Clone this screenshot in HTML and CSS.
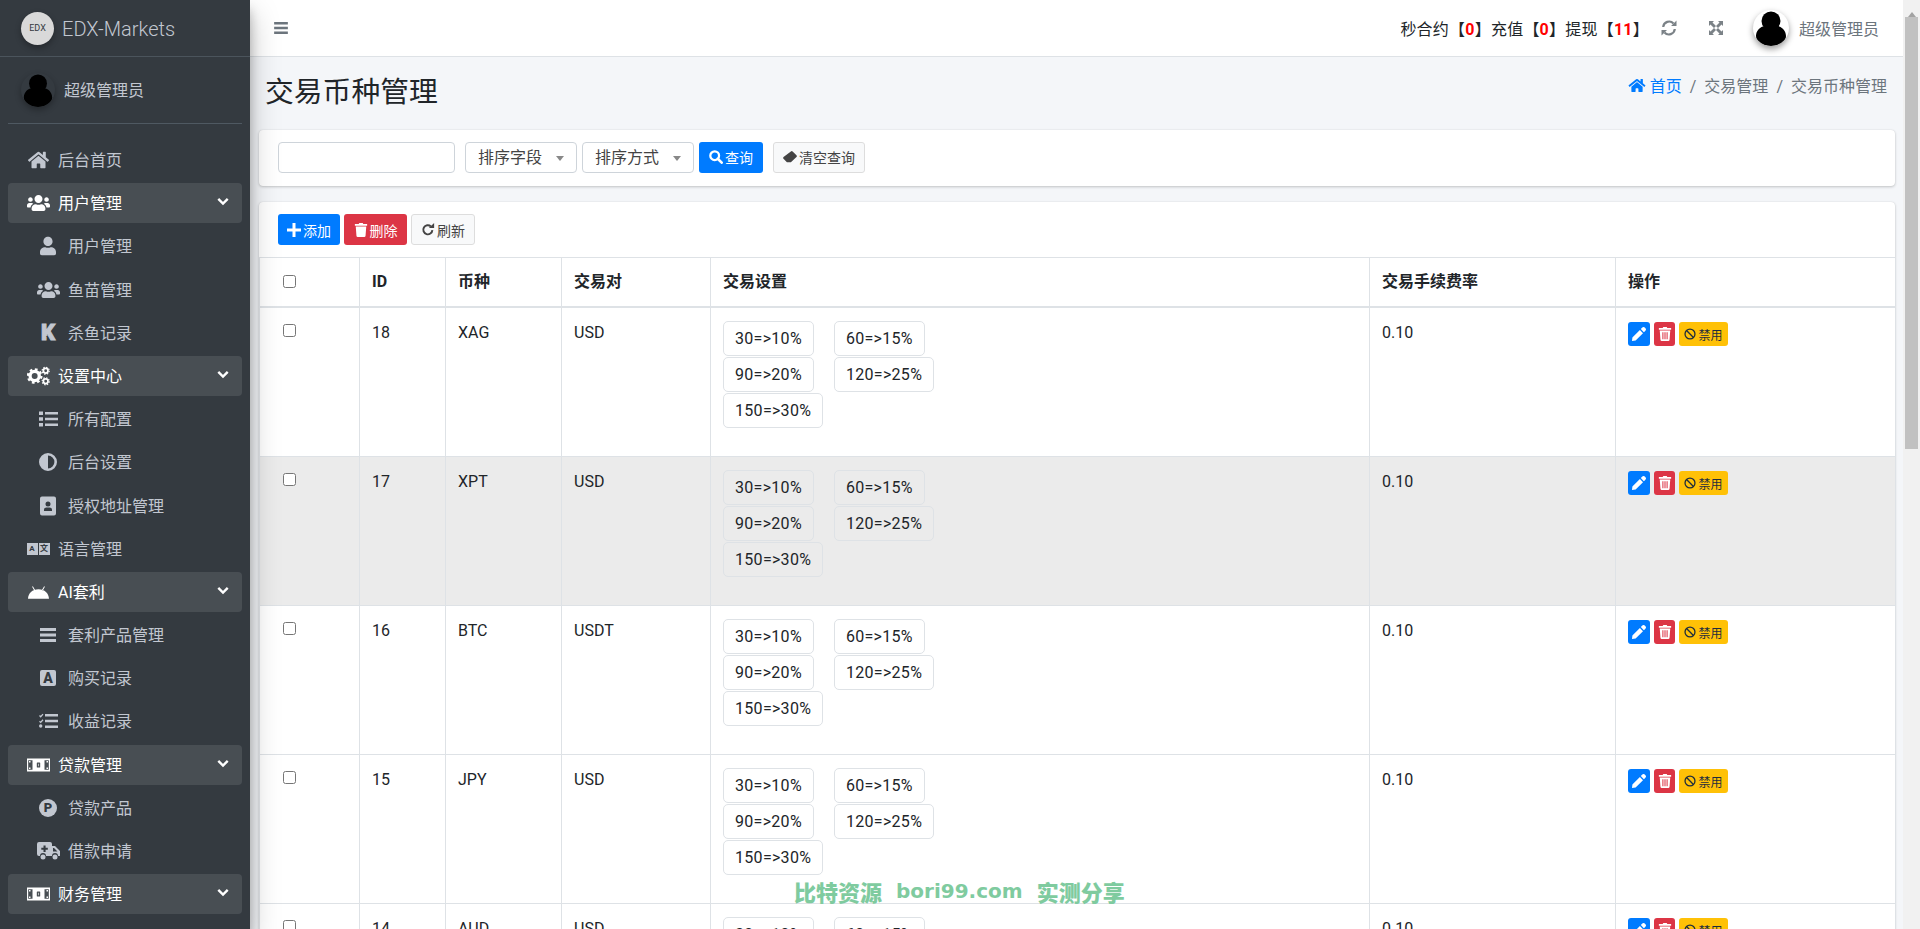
FILE: index.html
```html
<!DOCTYPE html>
<html lang="zh-CN">
<head>
    <meta charset="UTF-8">
    <meta name="viewport" content="width=device-width, initial-scale=1.0">
    <title>交易币种管理</title>
    <link rel="stylesheet" href="styles.css">
</head>
<body>

<svg class="icon-defs" aria-hidden="true">
    <symbol id="i-home" viewBox="0 0 576 512"><path d="M280.37 148.26L96 300.11V464a16 16 0 0 0 16 16l112.06-.29a16 16 0 0 0 15.92-16V368a16 16 0 0 1 16-16h64a16 16 0 0 1 16 16v95.64a16 16 0 0 0 16 16.05L464 480a16 16 0 0 0 16-16V300L295.67 148.26a12.19 12.19 0 0 0-15.3 0zM571.6 251.47L488 182.56V44.05a12 12 0 0 0-12-12h-56a12 12 0 0 0-12 12v72.61L318.47 43a48 48 0 0 0-61 0L4.34 251.47a12 12 0 0 0-1.6 16.9l25.5 31A12 12 0 0 0 45.15 301l235.22-193.74a12.19 12.19 0 0 1 15.3 0L530.9 301a12 12 0 0 0 16.9-1.6l25.5-31a12 12 0 0 0-1.7-16.93z"/></symbol>
    <symbol id="i-users" viewBox="0 0 640 512"><path d="M96 224c35.3 0 64-28.7 64-64s-28.7-64-64-64-64 28.7-64 64 28.7 64 64 64zm448 0c35.3 0 64-28.7 64-64s-28.7-64-64-64-64 28.7-64 64 28.7 64 64 64zm32 32h-64c-17.6 0-33.5 7.1-45.1 18.6 40.3 22.1 68.9 62 75.1 109.4h66c17.7 0 32-14.3 32-32v-32c0-35.3-28.7-64-64-64zm-256 0c61.9 0 112-50.1 112-112S381.9 32 320 32 208 82.1 208 144s50.1 112 112 112zm76.8 32h-8.3c-20.8 10-43.9 16-68.5 16s-47.6-6-68.5-16h-8.3C179.6 288 128 339.6 128 403.2V432c0 26.5 21.5 48 48 48h288c26.5 0 48-21.5 48-48v-28.8c0-63.6-51.6-115.2-115.2-115.2zm-223.7-13.4C161.5 263.1 145.6 256 128 256H64c-35.3 0-64 28.7-64 64v32c0 17.7 14.3 32 32 32h65.9c6.3-47.4 34.9-87.3 75.2-109.4z"/></symbol>
    <symbol id="i-user" viewBox="0 0 448 512"><path d="M224 256c70.7 0 128-57.3 128-128S294.7 0 224 0 96 57.3 96 128s57.3 128 128 128zm89.6 32h-16.7c-22.2 10.2-46.9 16-72.9 16s-50.6-5.8-72.9-16h-16.7C60.2 288 0 348.2 0 422.4V464c0 26.5 21.5 48 48 48h352c26.5 0 48-21.5 48-48v-41.6c0-74.2-60.2-134.4-134.4-134.4z"/></symbol>
    <symbol id="i-chevron" viewBox="0 0 14 10"><path d="M1.5 2.5L7 8l5.500-5.500" fill="none" stroke="currentColor" stroke-width="2.800"/></symbol>
    <symbol id="i-cogs" viewBox="0 0 24 20">
        <circle cx="8" cy="10" r="4.800" fill="none" stroke="currentColor" stroke-width="3.400"/>
        <circle cx="8" cy="10" r="7" fill="none" stroke="currentColor" stroke-width="2.400" stroke-dasharray="2.800 2.700"/>
        <circle cx="19.500" cy="4.500" r="2.400" fill="none" stroke="currentColor" stroke-width="1.800"/>
        <circle cx="19.500" cy="4.500" r="3.700" fill="none" stroke="currentColor" stroke-width="1.200" stroke-dasharray="1.500 1.400"/>
        <circle cx="19.500" cy="15.500" r="2.400" fill="none" stroke="currentColor" stroke-width="1.800"/>
        <circle cx="19.500" cy="15.500" r="3.700" fill="none" stroke="currentColor" stroke-width="1.200" stroke-dasharray="1.500 1.400"/>
    </symbol>
    <symbol id="i-list" viewBox="0 0 19 15"><path d="M0 0h4v3.600H0zM0 5.700h4v3.600H0zM0 11.400h4V15H0zM6 .6h13v2.400H6zM6 6.300h13v2.400H6zM6 12h13v2.400H6z"/></symbol>
    <symbol id="i-adjust" viewBox="0 0 18 18"><path fill-rule="evenodd" d="M9 0a9 9 0 1 1 0 18A9 9 0 0 1 9 0zm0 2.600v12.800a6.400 6.400 0 0 0 0-12.800z"/></symbol>
    <symbol id="i-contact" viewBox="0 0 16 19"><path fill-rule="evenodd" d="M2 0h12a2 2 0 0 1 2 2v15a2 2 0 0 1-2 2H2a2 2 0 0 1-2-2V2a2 2 0 0 1 2-2zm6 5a2.500 2.500 0 1 0 0 5 2.500 2.500 0 0 0 0-5zm-4 9.500h8v-1.300c0-1.300-1.200-2.200-2.400-2.200H6.400C5.200 11 4 11.900 4 13.200z"/></symbol>
    <symbol id="i-android" viewBox="0 0 22 14"><path d="M0 14C.3 8.500 4.500 4.200 11 4.200S21.700 8.500 22 14zM6.500 5.500L4.300 1.500l.8-.5 2.300 4zM15.500 5.500l2.200-4-.8-.5-2.300 4z"/></symbol>
    <symbol id="i-bars" viewBox="0 0 16 14"><path d="M0 0h16v3H0zM0 5.500h16v3H0zM0 11h16v3H0z"/></symbol>
    <symbol id="i-tasks" viewBox="0 0 19 15"><path d="M6 .6h13v2.400H6zM6 6.300h13v2.400H6zM6 12h13v2.400H6zM0 12.500a1.700 1.700 0 1 1 3.400 0 1.700 1.700 0 0 1-3.400 0z"/><path d="M.5 2l1.200 1.200L4 .6M.5 7.700l1.200 1.200L4 6.300" fill="none" stroke="currentColor" stroke-width="1.300"/></symbol>
    <symbol id="i-money" viewBox="0 0 23 13"><path fill-rule="evenodd" d="M0 0h23v13H0zM1.200 1.800v9.400h4.300V1.800zM17.500 1.800v9.400h4.300V1.800zM2 2.600h1.500v1.500H2zM2 8.900h1.500v1.500H2zM19.500 2.600H21v1.500h-1.500zM19.500 8.900H21v1.500h-1.500zM10.400 4h2.200a.6.6 0 0 1 .6.6v3.800a.6.6 0 0 1-.6.600h-2.200a.6.6 0 0 1-.6-.6V4.600a.6.6 0 0 1 .6-.6zm.8 1.200v2.600h.6V5.200z"/></symbol>
    <symbol id="i-ambulance" viewBox="0 0 23 18"><path fill-rule="evenodd" d="M2 0h11a2 2 0 0 1 2 2v2h3l5 5v5h-2a3 3 0 0 0-6 0H9a3 3 0 0 0-6 0H2a2 2 0 0 1-2-2V2a2 2 0 0 1 2-2zm4.500 3.500v2.200H4.300v2.100h2.200V10h2.100V7.800h2.200V5.700H8.600V3.500zM16 6v3.500h4.500L17 6z"/><circle cx="6" cy="15" r="2.500"/><circle cx="18" cy="15" r="2.500"/></symbol>
    <symbol id="i-search" viewBox="0 0 16 16"><circle cx="6.500" cy="6.500" r="5" fill="none" stroke="currentColor" stroke-width="2.600"/><path d="M10 10l4.500 4.500" stroke="currentColor" stroke-width="3" stroke-linecap="round"/></symbol>
    <symbol id="i-eraser" viewBox="0 0 16 14"><path d="M9 .6a1.500 1.500 0 0 1 2 0l4.400 4.400a1.500 1.500 0 0 1 0 2L9 13H4.500L.6 9.100a1.500 1.500 0 0 1 0-2z"/></symbol>
    <symbol id="i-plus" viewBox="0 0 14 14"><path d="M5.500 0h3v5.500H14v3H8.500V14h-3V8.500H0v-3h5.500z"/></symbol>
    <symbol id="i-trash" viewBox="0 0 14 16"><path d="M5 0h4l.6 1H14v2H0V1h4.400zM1 4h12l-.8 10.600A1.500 1.500 0 0 1 10.700 16H3.300a1.500 1.500 0 0 1-1.500-1.400z"/></symbol>
    <symbol id="i-trash-o" viewBox="0 0 14 16"><path fill-rule="evenodd" d="M5 0h4l.6 1H14v2H0V1h4.400zM1 4h12l-.8 10.600A1.500 1.500 0 0 1 10.700 16H3.300a1.500 1.500 0 0 1-1.500-1.400zm3 2v8h1.200V6zm2.400 0v8h1.200V6zm2.400 0v8H10V6z"/></symbol>
    <symbol id="i-redo" viewBox="0 0 16 16"><path d="M13 8.200a5.200 5.200 0 1 1-1.700-4.300" fill="none" stroke="currentColor" stroke-width="2.200"/><path d="M9 5.800h6V0z"/></symbol>
    <symbol id="i-pencil" viewBox="0 0 14 14"><path d="M10.300.6a1.800 1.800 0 0 1 2.500 0l.6.6a1.800 1.800 0 0 1 0 2.500l-1.500 1.500-3.100-3.100zM7.900 3.100L11 6.200 3.600 13.600 0 14l.4-3.500z"/></symbol>
    <symbol id="i-ban" viewBox="0 0 14 14"><circle cx="7" cy="7" r="5.800" fill="none" stroke="currentColor" stroke-width="1.500"/><path d="M3 3l8 8" stroke="currentColor" stroke-width="1.500"/></symbol>
    <symbol id="i-sync" viewBox="0 0 16 16"><path d="M2.200 7A6 6 0 0 1 12.500 3.400M13.800 9A6 6 0 0 1 3.500 12.600" fill="none" stroke="currentColor" stroke-width="2.200"/><path d="M15.500 .6v5.500H10zM.5 15.400V9.900H6z"/></symbol>
    <symbol id="i-expand" viewBox="0 0 14 14"><path d="M0 0h5L3.500 1.500 7 5 5 7 1.500 3.500 0 5zM14 0v5l-1.500-1.500L9 7 7 5l3.500-3.500L9 0zM14 14H9l1.500-1.500L7 9l2-2 3.500 3.500L14 9zM0 14V9l1.500 1.500L5 7l2 2-3.500 3.500L5 14z"/></symbol>
    <symbol id="i-avatar" viewBox="0 0 36 36"><circle cx="18" cy="11" r="9.500"/><path d="M3 26c0-6 5-9.500 8-9.800 2 1.800 4.500 2.500 7 2.500s5-.7 7-2.500c3 .3 8 3.800 8 9.800 0 6-7 10-15 10S3 32 3 26z"/></symbol>
</svg>

<div class="app">
    <aside class="sidebar">
        <div class="brand">
            <span class="brand-logo">EDX</span>
            <span class="brand-text">EDX-Markets</span>
        </div>
        <div class="user-panel">
            <svg class="avatar"><use href="#i-avatar"/></svg>
            <span>超级管理员</span>
        </div>
        <nav class="nav">
            <a class="nav-link"><span class="nav-icon"><svg class="w20"><use href="#i-home"/></svg></span>后台首页</a>
            <a class="nav-link open"><span class="nav-icon"><svg class="w23"><use href="#i-users"/></svg></span>用户管理<svg class="chevron"><use href="#i-chevron"/></svg></a>
            <a class="nav-link sub"><span class="nav-icon"><svg class="w16"><use href="#i-user"/></svg></span>用户管理</a>
            <a class="nav-link sub"><span class="nav-icon"><svg class="w23"><use href="#i-users"/></svg></span>鱼苗管理</a>
            <a class="nav-link sub"><span class="nav-icon"><span class="k-icon">K</span></span>杀鱼记录</a>
            <a class="nav-link open"><span class="nav-icon"><svg class="w23"><use href="#i-cogs"/></svg></span>设置中心<svg class="chevron"><use href="#i-chevron"/></svg></a>
            <a class="nav-link sub"><span class="nav-icon"><svg class="w19"><use href="#i-list"/></svg></span>所有配置</a>
            <a class="nav-link sub"><span class="nav-icon"><svg class="w18"><use href="#i-adjust"/></svg></span>后台设置</a>
            <a class="nav-link sub"><span class="nav-icon"><svg class="w16"><use href="#i-contact"/></svg></span>授权地址管理</a>
            <a class="nav-link"><span class="nav-icon"><span class="lang-icon"><b>A</b><b>文</b></span></span>语言管理</a>
            <a class="nav-link open"><span class="nav-icon"><svg class="w21"><use href="#i-android"/></svg></span>AI套利<svg class="chevron"><use href="#i-chevron"/></svg></a>
            <a class="nav-link sub"><span class="nav-icon"><svg class="w16"><use href="#i-bars"/></svg></span>套利产品管理</a>
            <a class="nav-link sub"><span class="nav-icon"><span class="box-icon">A</span></span>购买记录</a>
            <a class="nav-link sub"><span class="nav-icon"><svg class="w19"><use href="#i-tasks"/></svg></span>收益记录</a>
            <a class="nav-link open"><span class="nav-icon"><svg class="w23"><use href="#i-money"/></svg></span>贷款管理<svg class="chevron"><use href="#i-chevron"/></svg></a>
            <a class="nav-link sub"><span class="nav-icon"><span class="circle-icon">P</span></span>贷款产品</a>
            <a class="nav-link sub"><span class="nav-icon"><svg class="w23"><use href="#i-ambulance"/></svg></span>借款申请</a>
            <a class="nav-link open"><span class="nav-icon"><svg class="w23"><use href="#i-money"/></svg></span>财务管理<svg class="chevron"><use href="#i-chevron"/></svg></a>
        </nav>
    </aside>

    <div class="main">
        <header class="topbar">
            <svg class="menu-toggle"><use href="#i-bars"/></svg>
            <div class="topbar-right">
                <div class="counters">秒合约<span class="br">【</span><b>0</b><span class="br">】</span>充值<span class="br">【</span><b>0</b><span class="br">】</span>提现<span class="br">【</span><b>11</b><span class="br">】</span></div>
                <svg class="top-icon sync"><use href="#i-sync"/></svg>
                <svg class="top-icon expand"><use href="#i-expand"/></svg>
                <svg class="avatar top-avatar"><use href="#i-avatar"/></svg>
                <span class="top-name">超级管理员</span>
            </div>
        </header>

        <div class="content-header">
            <h1>交易币种管理</h1>
            <div class="breadcrumb">
                <a><svg class="crumb-home"><use href="#i-home"/></svg> 首页</a>
                <span class="sep">/</span>
                <span>交易管理</span>
                <span class="sep">/</span>
                <span>交易币种管理</span>
            </div>
        </div>

        <div class="card search-card">
            <input type="text" class="search-input">
            <button class="select-btn">排序字段<i class="caret"></i></button>
            <button class="select-btn">排序方式<i class="caret"></i></button>
            <button class="btn btn-primary search-btn"><svg class="btn-icon"><use href="#i-search"/></svg>查询</button>
            <button class="btn btn-light clear-btn"><svg class="btn-icon"><use href="#i-eraser"/></svg>清空查询</button>
        </div>

        <div class="card table-card">
            <div class="toolbar">
                <button class="btn btn-primary"><svg class="btn-icon"><use href="#i-plus"/></svg>添加</button>
                <button class="btn btn-danger"><svg class="btn-icon"><use href="#i-trash"/></svg>删除</button>
                <button class="btn btn-light"><svg class="btn-icon"><use href="#i-redo"/></svg>刷新</button>
            </div>
            <table>
                <colgroup>
                    <col class="col-check"><col class="col-id"><col class="col-coin"><col class="col-pair">
                    <col class="col-set"><col class="col-fee"><col class="col-op">
                </colgroup>
                <thead>
                    <tr>
                        <th class="check"><input type="checkbox"></th>
                        <th>ID</th><th>币种</th><th>交易对</th><th>交易设置</th><th>交易手续费率</th><th>操作</th>
                    </tr>
                </thead>
                <tbody>
                    <tr>
                        <td class="check"><input type="checkbox"></td>
                        <td>18</td><td>XAG</td><td>USD</td>
                        <td><div class="tags"><span class="tag">30=&gt;10%</span><span class="tag">60=&gt;15%</span><span class="tag">90=&gt;20%</span><span class="tag">120=&gt;25%</span><span class="tag">150=&gt;30%</span></div></td>
                        <td>0.10</td>
                        <td><div class="ops"><button class="op op-edit"><svg><use href="#i-pencil"/></svg></button><button class="op op-del"><svg><use href="#i-trash-o"/></svg></button><button class="op op-ban"><svg><use href="#i-ban"/></svg>禁用</button></div></td>
                    </tr>
                    <tr class="hover">
                        <td class="check"><input type="checkbox"></td>
                        <td>17</td><td>XPT</td><td>USD</td>
                        <td><div class="tags"><span class="tag">30=&gt;10%</span><span class="tag">60=&gt;15%</span><span class="tag">90=&gt;20%</span><span class="tag">120=&gt;25%</span><span class="tag">150=&gt;30%</span></div></td>
                        <td>0.10</td>
                        <td><div class="ops"><button class="op op-edit"><svg><use href="#i-pencil"/></svg></button><button class="op op-del"><svg><use href="#i-trash-o"/></svg></button><button class="op op-ban"><svg><use href="#i-ban"/></svg>禁用</button></div></td>
                    </tr>
                    <tr>
                        <td class="check"><input type="checkbox"></td>
                        <td>16</td><td>BTC</td><td>USDT</td>
                        <td><div class="tags"><span class="tag">30=&gt;10%</span><span class="tag">60=&gt;15%</span><span class="tag">90=&gt;20%</span><span class="tag">120=&gt;25%</span><span class="tag">150=&gt;30%</span></div></td>
                        <td>0.10</td>
                        <td><div class="ops"><button class="op op-edit"><svg><use href="#i-pencil"/></svg></button><button class="op op-del"><svg><use href="#i-trash-o"/></svg></button><button class="op op-ban"><svg><use href="#i-ban"/></svg>禁用</button></div></td>
                    </tr>
                    <tr>
                        <td class="check"><input type="checkbox"></td>
                        <td>15</td><td>JPY</td><td>USD</td>
                        <td><div class="tags"><span class="tag">30=&gt;10%</span><span class="tag">60=&gt;15%</span><span class="tag">90=&gt;20%</span><span class="tag">120=&gt;25%</span><span class="tag">150=&gt;30%</span></div></td>
                        <td>0.10</td>
                        <td><div class="ops"><button class="op op-edit"><svg><use href="#i-pencil"/></svg></button><button class="op op-del"><svg><use href="#i-trash-o"/></svg></button><button class="op op-ban"><svg><use href="#i-ban"/></svg>禁用</button></div></td>
                    </tr>
                    <tr>
                        <td class="check"><input type="checkbox"></td>
                        <td>14</td><td>AUD</td><td>USD</td>
                        <td><div class="tags"><span class="tag">30=&gt;10%</span><span class="tag">60=&gt;15%</span><span class="tag">90=&gt;20%</span><span class="tag">120=&gt;25%</span><span class="tag">150=&gt;30%</span></div></td>
                        <td>0.10</td>
                        <td><div class="ops"><button class="op op-edit"><svg><use href="#i-pencil"/></svg></button><button class="op op-del"><svg><use href="#i-trash-o"/></svg></button><button class="op op-ban"><svg><use href="#i-ban"/></svg>禁用</button></div></td>
                    </tr>
                </tbody>
            </table>
        </div>
    </div>

    <div class="scrollbar" aria-hidden="true">
        <div class="scroll-up"></div>
        <div class="scroll-thumb"></div>
    </div>
</div>

<div class="watermark"><span>比特资源</span><span>bori99.com</span><span>实测分享</span></div>

</body>
</html>
```

FILE: styles.css
```css
* {
    box-sizing: border-box;
}
html, body {
    margin: 0;
    height: 100%;
    overflow: hidden;
}
body {
    font-family: Roboto, "Noto Sans CJK SC", sans-serif;
    font-size: 16px;
    line-height: 24px;
    color: #212529;
    background-color: #f4f6f9;
}
button, input {
    font-family: inherit;
}
.icon-defs {
    display: none;
}
.app {
    display: flex;
    height: 929px;
    overflow: hidden;
}

/* sidebar */
.sidebar {
    flex: 0 0 250px;
    position: relative;
    z-index: 5;
    background-color: #343a40;
    color: #c2c7d0;
    box-shadow: 0 14px 28px rgba(0, 0, 0, .25), 0 10px 10px rgba(0, 0, 0, .22);
}
.brand {
    display: flex;
    align-items: center;
    height: 57px;
    padding-left: 21px;
    border-bottom: 1px solid #4b545c;
}
.brand-logo {
    width: 33px;
    height: 33px;
    border-radius: 50%;
    background-color: #d9d9d9;
    color: #343a40;
    font-size: 9px;
    line-height: 33px;
    text-align: center;
    box-shadow: 0 3px 6px rgba(0, 0, 0, .3);
}
.brand-text {
    margin-left: 8px;
    padding-top: 2px;
    font-size: 20px;
    font-weight: 300;
}
.user-panel {
    display: flex;
    align-items: center;
    height: 67px;
    margin: 0 8px;
    padding-left: 13px;
    border-bottom: 1px solid #4f5962;
}
.user-panel span {
    margin-left: 9px;
    padding-top: 2px;
}
.avatar {
    width: 34px;
    height: 34px;
    fill: #000;
    border-radius: 50%;
    box-shadow: 0 3px 6px rgba(0, 0, 0, .3);
}
.nav {
    margin-top: 16px;
    padding: 0 8px;
}
.nav-link {
    display: flex;
    align-items: center;
    height: 40px;
    margin-bottom: 3.2px;
    padding: 2px 0 0 10px;
    border-radius: 4px;
    white-space: nowrap;
}
.nav-link.sub {
    padding-left: 20px;
}
.nav-link.open {
    position: relative;
    background-color: rgba(255, 255, 255, .1);
    color: #fff;
}
.nav-icon {
    flex: 0 0 40px;
    display: flex;
    align-items: center;
    justify-content: center;
    margin-top: -2px;
    fill: currentColor;
}
.nav-icon svg {
    height: 20px;
}
.w16 { width: 16px; }
.w18 { width: 18px; }
.w19 { width: 19px; }
.w20 { width: 21px; }
.w21 { width: 21px; }
.w23 { width: 23px; }
.chevron {
    position: absolute;
    right: 13px;
    top: 13px;
    width: 12px;
    height: 10px;
}
.k-icon {
    font-size: 22px;
    font-weight: 900;
    line-height: 20px;
    -webkit-text-stroke: 1px #c2c7d0;
}
.lang-icon {
    display: flex;
    gap: 1px;
}
.lang-icon b {
    width: 11px;
    height: 12px;
    background-color: #c2c7d0;
    color: #343a40;
    font-size: 8px;
    line-height: 12px;
    text-align: center;
}
.box-icon {
    width: 16px;
    height: 16px;
    border-radius: 2px;
    background-color: #c2c7d0;
    color: #343a40;
    font-size: 14px;
    font-weight: 900;
    line-height: 16px;
    text-align: center;
}
.circle-icon {
    width: 18px;
    height: 18px;
    border-radius: 50%;
    background-color: #c2c7d0;
    color: #343a40;
    font-size: 13px;
    font-weight: 900;
    line-height: 18px;
    text-align: center;
}

/* top bar */
.main {
    flex: 1;
    min-width: 0;
}
.topbar {
    display: flex;
    align-items: center;
    justify-content: space-between;
    height: 57px;
    padding-left: 24px;
    background-color: #fff;
    border-bottom: 1px solid #dee2e6;
}
.menu-toggle {
    width: 14px;
    height: 12px;
    fill: #6c757d;
}
.topbar-right {
    display: flex;
    align-items: center;
    padding-right: 24px;
}
.counters {
    padding-top: 3px;
    letter-spacing: .22px;
    white-space: nowrap;
}
.counters b {
    color: #f00;
    font-weight: 700;
}
.top-icon {
    width: 16px;
    height: 16px;
    fill: #7b8287;
    color: #7b8287;
}
.sync {
    margin-left: 12px;
}
.expand {
    width: 14px;
    height: 14px;
    margin-left: 32px;
}
.top-avatar {
    width: 36px;
    height: 36px;
    margin-left: 30px;
    background-color: #fff;
    box-shadow: 0 3px 6px rgba(0, 0, 0, .4);
}
.top-name {
    margin-left: 10px;
    padding-top: 3px;
    color: #6c757d;
}

/* title */
.content-header {
    display: flex;
    align-items: center;
    justify-content: space-between;
    height: 73px;
    padding: 0 16px 4px 15px;
}
h1 {
    margin: 0;
    font-size: 28.8px;
    font-weight: 400;
    line-height: 34px;
}
.breadcrumb {
    display: flex;
    align-items: center;
    margin-bottom: 9px;
    color: #6c757d;
}
.breadcrumb a {
    color: #007bff;
}
.crumb-home {
    width: 18px;
    height: 15px;
    fill: #007bff;
    vertical-align: -1px;
}
.sep {
    margin: 0 8px;
}

/* cards */
.card {
    margin: 0 8px 16px 9px;
    background-color: #fff;
    border-radius: 4px;
    box-shadow: 0 0 1px rgba(0, 0, 0, .125), 0 1px 3px rgba(0, 0, 0, .2);
}
.search-card {
    display: flex;
    align-items: center;
    height: 56px;
    padding: 0 0 2px 19px;
}
.search-input {
    width: 177px;
    height: 31px;
    margin-right: 10px;
    border: 1px solid #ced4da;
    border-radius: 4px;
}
.select-btn {
    display: flex;
    align-items: center;
    width: 112px;
    height: 31px;
    margin-right: 5px;
    padding: 0 0 2px 12px;
    border: 1px solid #ced4da;
    border-radius: 4px;
    background-color: #fff;
    color: #444;
    font-size: 16px;
}
.caret {
    margin: 5px 0 0 14px;
    border-style: solid;
    border-width: 5px 4px 0 4px;
    border-color: #888 transparent transparent transparent;
}
.btn {
    display: inline-flex;
    align-items: center;
    justify-content: center;
    height: 31px;
    padding: 0;
    border: 1px solid transparent;
    border-radius: 3px;
    font-size: 14px;
}
.btn-icon {
    width: 14px;
    height: 14px;
    margin-right: 2px;
    fill: currentColor;
}
.btn-primary {
    width: 62px;
    background-color: #007bff;
    color: #fff;
}
.btn-danger {
    width: 63px;
    background-color: #dc3545;
    color: #fff;
}
.btn-light {
    width: 64px;
    background-color: #f8f9fa;
    border-color: #ddd;
    color: #444;
}
.search-btn {
    width: 64px;
    margin-right: 10px;
}
.clear-btn {
    width: 92px;
}

/* table */
.table-card {
    padding-top: 12px;
}
.toolbar {
    display: flex;
    gap: 4px;
    height: 31px;
    margin: 0 0 12px 19px;
}
table {
    width: 100%;
    table-layout: fixed;
    border-collapse: collapse;
}
.col-check { width: 100px; }
.col-id { width: 86px; }
.col-coin { width: 116px; }
.col-pair { width: 149px; }
.col-set { width: 659px; }
.col-fee { width: 246px; }
.col-op { width: 280px; }
th, td {
    padding: 12px;
    border: 1px solid #dee2e6;
    text-align: left;
    vertical-align: top;
}
td {
    padding: 13px 12px 11px 12px;
}
th {
    font-weight: 700;
    border-bottom-width: 2px;
}
.check {
    padding-left: 19px;
}
td.check {
    padding-top: 11px;
}
.check input {
    margin: 2px 3px 4px 4px;
    vertical-align: middle;
}
.hover td {
    background-color: #ebebeb;
}
.tags {
    display: flex;
    flex-wrap: wrap;
    width: 240px;
    padding-bottom: 16px;
}
.tag {
    height: 35px;
    margin: 0 20px 1px 0;
    padding: 5px 11px;
    border: 1px solid #dee2e6;
    border-radius: 5px;
    letter-spacing: .3px;
}
.ops {
    display: flex;
    gap: 4px;
    padding-top: 1px;
}
.op {
    display: flex;
    align-items: center;
    justify-content: center;
    height: 24px;
    padding: 0;
    border: 0;
    border-radius: 3px;
    font-size: 12px;
}
.op svg {
    width: 14px;
    height: 14px;
    fill: currentColor;
}
.op-edit {
    width: 22px;
    background-color: #007bff;
    color: #fff;
}
.op-del {
    width: 21px;
    background-color: #dc3545;
    color: #fff;
}
.op-ban {
    width: 49px;
    background-color: #ffc107;
    color: #1f2d3d;
}
.op-ban svg {
    width: 12px;
    height: 12px;
    margin-right: 2px;
    fill: none;
}

/* fake page scrollbar, headless shots drop the real one */
.scrollbar {
    flex: 0 0 17px;
    background-color: #f1f1f1;
}
.scroll-up {
    width: 0;
    height: 17px;
    margin: 0 auto;
    border-style: solid;
    border-width: 5px 4px;
    border-color: transparent transparent #a3a3a3 transparent;
}
.scroll-thumb {
    width: 13px;
    height: 432px;
    margin-left: 2px;
    background-color: #c1c1c1;
}

.watermark {
    position: absolute;
    left: 794px;
    top: 878px;
    display: flex;
    gap: 14px;
    color: #7fcb9f;
    font-family: "Noto Sans CJK SC", sans-serif;
    font-size: 22px;
    font-weight: 900;
    line-height: 26px;
}
.watermark span:nth-child(2) {
    font-family: "DejaVu Sans", sans-serif;
    font-size: 20px;
}
```
